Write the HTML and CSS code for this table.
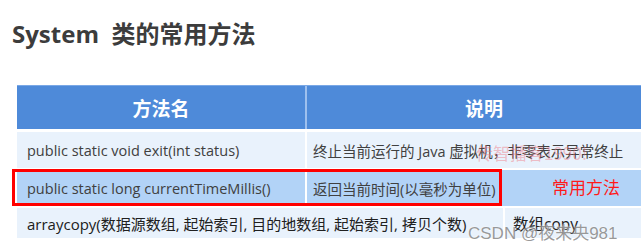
FILE: index.html
```html
<!DOCTYPE html>
<html lang="zh">
<head>
<meta charset="utf-8">
<link rel="stylesheet" href="styles.css">
</head>
<body>
<div class="page">
  <h1 class="title">System&nbsp; 类的常用方法</h1>
  <div class="table">
    <div class="row head">
      <div class="cell c1">方法名</div>
      <div class="cell c2">说明</div>
    </div>
    <div class="row r1">
      <div class="cell c1">public static void exit(int status)</div>
      <div class="cell c2">终止当前运行的 Java 虚拟机，非零表示异常终止<span class="wm1">传智播客1990!</span></div>
    </div>
    <div class="row r2">
      <div class="cell c1">public static long currentTimeMillis()</div>
      <div class="cell c2">返回当前时间(以毫秒为单位)</div>
      <div class="cell c3">常用方法</div>
      <div class="redbox"></div>
    </div>
    <div class="row r3">
      <div class="cell c1w">arraycopy(数据源数组, 起始索引, 目的地数组, 起始索引, 拷贝个数)</div>
      <div class="cell c2w">数组copy<span class="wm2">CSDN @夜来央981</span></div>
    </div>
  </div>
</div>
</body>
</html>
```
FILE: styles.css
```css
html, body {
  margin: 0;
  padding: 0;
  background: #ffffff;
  overflow: hidden;
}
.page {
  width: 641px;
  height: 250px;
  overflow: hidden;
  font-family: "Open Sans", "Noto Sans CJK SC", sans-serif;
  color: #404040;
}
.title {
  margin: 0;
  padding: 16px 0 0 12px;
  height: 36px;
  font-size: 24px;
  font-weight: 700;
  line-height: 36px;
  color: #3c3c3c;
  letter-spacing: 0;
}
.table {
  margin: 33px 0 0 17px;
  width: 650px;
  display: flex;
  flex-direction: column;
  gap: 2px;
}
.row {
  display: flex;
  gap: 2px;
  position: relative;
}
.cell {
  display: flex;
  align-items: center;
  white-space: nowrap;
  font-size: 14.5px;
  position: relative;
}
.c1 { width: 278px; padding-left: 10px; }
.c2 { width: 186px; padding-left: 6px; }
.head {
  height: 44px;
  background: #4e8ad9;
  border-top: 1px solid #7aa8e6;
  box-sizing: border-box;
  margin-bottom: 1px;
}
.head .cell {
  background: #4e8ad9;
  color: #ffffff;
  font-weight: 700;
  font-size: 19px;
  justify-content: center;
  padding: 0;
}
.head .c1 { width: 288px; }
.head .c2 { flex: 1; padding-right: 6px; }
.head .cell + .cell { box-shadow: -2px 0 0 #9ec0ee; }
.r1 { height: 36px; }
.r1 .cell { background: #e9f2fc; }
.r1 .c2 { flex: 1; }
.r2 { height: 36px; }
.r2 .cell { background: #b2d3f7; }
.r2 .c2 { width: 192px; }
.r2 .c3 {
  flex: 1;
  margin-left: -2px;
  color: #ff1a1a;
  font-size: 17px;
  padding-left: 47px;
  padding-bottom: 3px;
}
.redbox {
  position: absolute;
  left: -5px;
  top: -1px;
  width: 490px;
  height: 37px;
  border: 3px solid #ff0000;
  box-sizing: border-box;
}
.r3 { height: 30px; }
.r3 .cell { background: #e9f2fc; }
.c1w {
  width: 476px;
  padding-left: 10px;
  color: #202020;
  font-size: 15px;
}
.c2w {
  flex: 1;
  padding-left: 8px;
  color: #202020;
  font-size: 15.5px;
}
.wm1 {
  position: absolute;
  left: 169px;
  top: 8px;
  font-size: 17px;
  color: rgba(240, 120, 130, 0.45);
  font-family: "Noto Sans CJK SC", sans-serif;
}
.wm2 {
  position: absolute;
  left: -37px;
  top: 11px;
  font-size: 17px;
  color: rgba(120, 120, 120, 0.75);
  font-family: "Liberation Sans", "Noto Sans CJK SC", sans-serif;
  text-shadow: 0 0 2px #fff;
}
```
